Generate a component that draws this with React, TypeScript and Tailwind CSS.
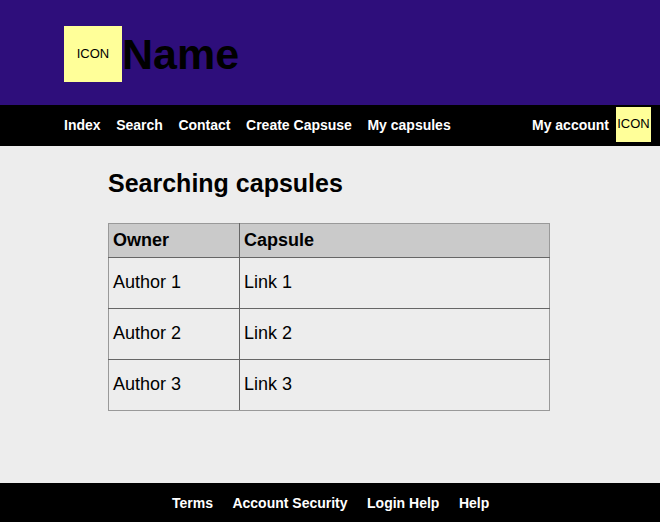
const nav = [
  { label: "Index", cls: "ml-[64px]" },
  { label: "Search", cls: "ml-[15.56px]" },
  { label: "Contact", cls: "ml-[15.56px]" },
  { label: "Create Capsuse", cls: "ml-[15.56px]" },
  { label: "My capsules", cls: "ml-[15.56px]" },
];
const rows = [1, 2, 3];
const footer = ["Terms", "Account Security", "Login Help", "Help"];

export default function App() {
  return (
    <div className="flex h-[522px] w-[660px] flex-col overflow-hidden bg-[#ededed] text-black [font-family:'Liberation_Sans',Arial,sans-serif]">
      <header className="flex h-[105px] items-start bg-[#2e0e7b] pt-[26px] pl-[64px]">
        <div className="flex h-[56px] w-[58px] items-center justify-center bg-[#ffff99] text-[13px]">ICON</div>
        <h1 className="text-[43px] leading-[56px] font-bold">Name</h1>
      </header>
      <nav className="flex h-[41px] items-start bg-black text-[14px] leading-[41px] font-bold text-white">
        {nav.map((n) => (
          <a key={n.label} className={n.cls}>{n.label}</a>
        ))}
        <a className="ml-auto">My account</a>
        <div className="mt-[2px] mr-[9px] ml-[7px] flex h-[35px] w-[35px] items-center justify-center bg-[#ffff99] pb-[2px] text-[13px] leading-none font-normal text-black">ICON</div>
      </nav>
      <main className="flex-1 pt-[22px] pl-[108px]">
        <h2 className="text-[25px] leading-[30px] font-bold">Searching capsules</h2>
        <table className="mt-[25px] w-[442px] table-fixed border-collapse text-left text-[18px]">
          <colgroup>
            <col className="w-[131px]" />
            <col />
          </colgroup>
          <thead>
            <tr className="h-[34px] bg-[#cacaca]">
              <th className="border border-[#666] border-t-[#999] border-l-[#999] px-[4px] py-0">Owner</th>
              <th className="border border-[#666] border-t-[#999] border-r-[#999] px-[4px] py-0">Capsule</th>
            </tr>
          </thead>
          <tbody>
            {rows.map((r) => (
              <tr key={r} className="group h-[51px]">
                <td className="border border-[#666] border-l-[#999] px-[4px] pt-0 pb-[2px] group-last:border-b-[#999]">Author {r}</td>
                <td className="border border-[#666] border-r-[#999] px-[4px] pt-0 pb-[2px] group-last:border-b-[#999]">Link {r}</td>
              </tr>
            ))}
          </tbody>
        </table>
      </main>
      <footer className="flex h-[39px] justify-center gap-[19.5px] bg-black pl-[1.2px] text-[14px] leading-[40px] font-bold text-white">
        {footer.map((f) => (
          <a key={f}>{f}</a>
        ))}
      </footer>
    </div>
  );
}
